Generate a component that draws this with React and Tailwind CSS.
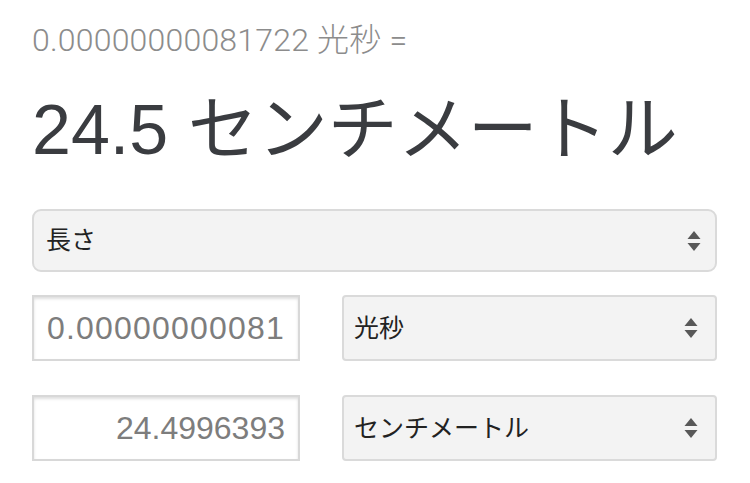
import React from "react";

const SANS = "font-['Liberation_Sans','Noto_Sans_CJK_JP',sans-serif]";

function UpDown() {
  return (
    <svg width="14" height="22" viewBox="0 0 14 22" className="shrink-0">
      <path d="M7 1 L13.5 9 H0.5 Z" fill="#585858" />
      <path d="M7 21 L13.5 13 H0.5 Z" fill="#585858" />
    </svg>
  );
}

function SelectBox({ label, className }) {
  return (
    <div
      className={`flex items-center justify-between border-2 border-[#dadada] bg-[#f3f3f3] pl-[10px] pr-[14px] ${className}`}
    >
      <span className={`${SANS} text-[25px] leading-none text-[#222222]`}>{label}</span>
      <UpDown />
    </div>
  );
}

function NumberBox({ value, align, extra }) {
  return (
    <div
      className={`flex h-[66px] w-[268px] shrink-0 items-center overflow-hidden whitespace-nowrap border-2 border-[#d8d8d8] bg-white px-[13px] shadow-[inset_0_2px_3px_rgba(0,0,0,0.13)] ${align}`}
    >
      <span className={`${SANS} text-[32px] leading-none text-[#7d7d7d] ${extra}`}>{value}</span>
    </div>
  );
}

export default function App() {
  return (
    <div className="min-h-[483px] w-[750px] bg-white pl-[32px] pr-[33px] pt-[22px]">
      <div className="font-['Roboto','Noto_Sans_CJK_JP',sans-serif] text-[32px] font-light leading-[36px] tracking-[0.2px] text-[#8c8c8c]">
        0.00000000081722 光秒 =
      </div>
      <div className={`${SANS} mt-[32px] text-[70px] leading-[80px] text-[#3a3c40]`}>
        24.5 センチメートル
      </div>

      <SelectBox label="長さ" className="mt-[39px] h-[63px] rounded-[9px] pl-[12px]" />

      <div className="mt-[23px] flex">
        <NumberBox value="0.00000000081" align="justify-start" extra="tracking-[1.2px]" />
        <SelectBox label="光秒" className="ml-[42px] h-[66px] flex-1 rounded-[4px] pr-[17px]" />
      </div>

      <div className="mt-[34px] flex">
        <NumberBox value="24.4996393" align="justify-end" extra="" />
        <SelectBox label="センチメートル" className="ml-[42px] h-[66px] flex-1 rounded-[4px] pr-[17px]" />
      </div>
    </div>
  );
}
